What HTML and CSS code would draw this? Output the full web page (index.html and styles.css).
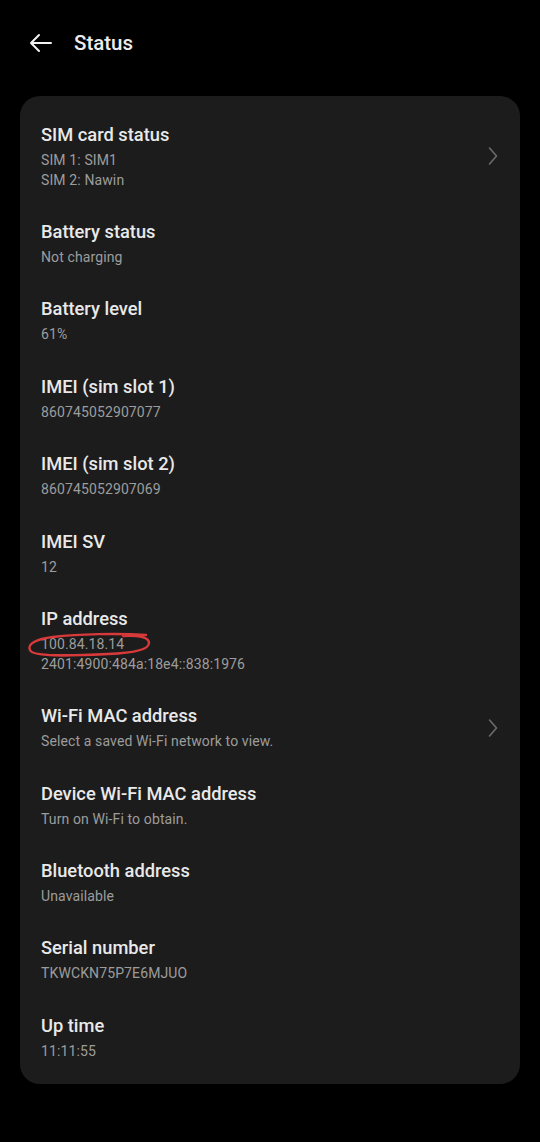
FILE: index.html
```html
<!DOCTYPE html>
<html lang="en">
<head>
  <meta charset="UTF-8" />
  <title>Status</title>
  <meta name="viewport" content="width=device-width, initial-scale=1.0"/>
  <link rel="stylesheet" href="styles.css">
</head>
<body>

<div class="header">
  <svg class="back" width="24" height="20" viewBox="0 0 24 20">
    <path d="M22 10H2M10 2L2 10L10 18" fill="none" stroke="#f2f2f2" stroke-width="2" stroke-linecap="round" stroke-linejoin="round"/>
  </svg>
  <h1>Status</h1>
</div>

<div class="card">
  <div class="item">
    <div class="text">
      <div class="title">SIM card status</div>
      <div class="sub">SIM 1: SIM1</div>
      <div class="sub">SIM 2: Nawin</div>
    </div>
    <svg class="chevron" width="10" height="20" viewBox="0 0 10 20">
      <path d="M1.5 2L8.5 10L1.5 18" fill="none" stroke="#6b6b6b" stroke-width="1.6" stroke-linecap="round" stroke-linejoin="round"/>
    </svg>
  </div>
  <div class="item">
    <div class="text">
      <div class="title">Battery status</div>
      <div class="sub">Not charging</div>
    </div>
  </div>
  <div class="item">
    <div class="text">
      <div class="title">Battery level</div>
      <div class="sub">61%</div>
    </div>
  </div>
  <div class="item">
    <div class="text">
      <div class="title">IMEI (sim slot 1)</div>
      <div class="sub">860745052907077</div>
    </div>
  </div>
  <div class="item">
    <div class="text">
      <div class="title">IMEI (sim slot 2)</div>
      <div class="sub">860745052907069</div>
    </div>
  </div>
  <div class="item">
    <div class="text">
      <div class="title">IMEI SV</div>
      <div class="sub">12</div>
    </div>
  </div>
  <div class="item">
    <div class="text">
      <div class="title">IP address</div>
      <div class="sub"><span class="marked">100.84.18.14
        <svg class="scribble" width="122" height="27" viewBox="0 0 122 27">
          <path d="M118 3C90 1 50 2 25 5C8 7 -1 12 2 18C4 25 40 24 80 22C105 21 121 18 121 11C121 5 110 3 95 4" fill="none" stroke="#d8393a" stroke-width="2.4" stroke-linecap="round"/>
        </svg>
      </span></div>
      <div class="sub">2401:4900:484a:18e4::838:1976</div>
    </div>
  </div>
  <div class="item">
    <div class="text">
      <div class="title">Wi-Fi MAC address</div>
      <div class="sub">Select a saved Wi-Fi network to view.</div>
    </div>
    <svg class="chevron" width="10" height="20" viewBox="0 0 10 20">
      <path d="M1.5 2L8.5 10L1.5 18" fill="none" stroke="#6b6b6b" stroke-width="1.6" stroke-linecap="round" stroke-linejoin="round"/>
    </svg>
  </div>
  <div class="item">
    <div class="text">
      <div class="title">Device Wi-Fi MAC address</div>
      <div class="sub">Turn on Wi-Fi to obtain.</div>
    </div>
  </div>
  <div class="item">
    <div class="text">
      <div class="title">Bluetooth address</div>
      <div class="sub">Unavailable</div>
    </div>
  </div>
  <div class="item">
    <div class="text">
      <div class="title">Serial number</div>
      <div class="sub">TKWCKN75P7E6MJUO</div>
    </div>
  </div>
  <div class="item">
    <div class="text">
      <div class="title">Up time</div>
      <div class="sub">11:11:55</div>
    </div>
  </div>
</div>

</body>
</html>
```

FILE: styles.css
```css
* {
  margin: 0;
  padding: 0;
  box-sizing: border-box;
  font-family: Roboto, "Noto Sans", sans-serif;
}

body {
  background: #000;
  width: 540px;
  height: 1142px;
}

.header {
  height: 86px;
  display: flex;
  align-items: center;
  padding-left: 29px;
  gap: 21px;
}

.header h1 {
  font-size: 20.5px;
  font-weight: 500;
  color: #ececec;
}

.card {
  margin: 10px 20px 0;
  background: #1c1c1c;
  border-radius: 20px;
  padding: 11.5px 0 8px;
}

.item {
  display: flex;
  align-items: center;
  justify-content: space-between;
  padding: 15.2px 21px 15.2px 21px;
}

.title {
  font-size: 18.3px;
  font-weight: 500;
  line-height: 24px;
  color: #e9e9e9;
  margin-bottom: 3px;
}

.sub {
  font-size: 14px;
  line-height: 20px;
  letter-spacing: 0.12px;
  color: #9c9c9c;
}

.chevron {
  margin-right: 1px;
}

.marked {
  position: relative;
}

.scribble {
  position: absolute;
  left: -13px;
  top: -4px;
  overflow: visible;
}
```
